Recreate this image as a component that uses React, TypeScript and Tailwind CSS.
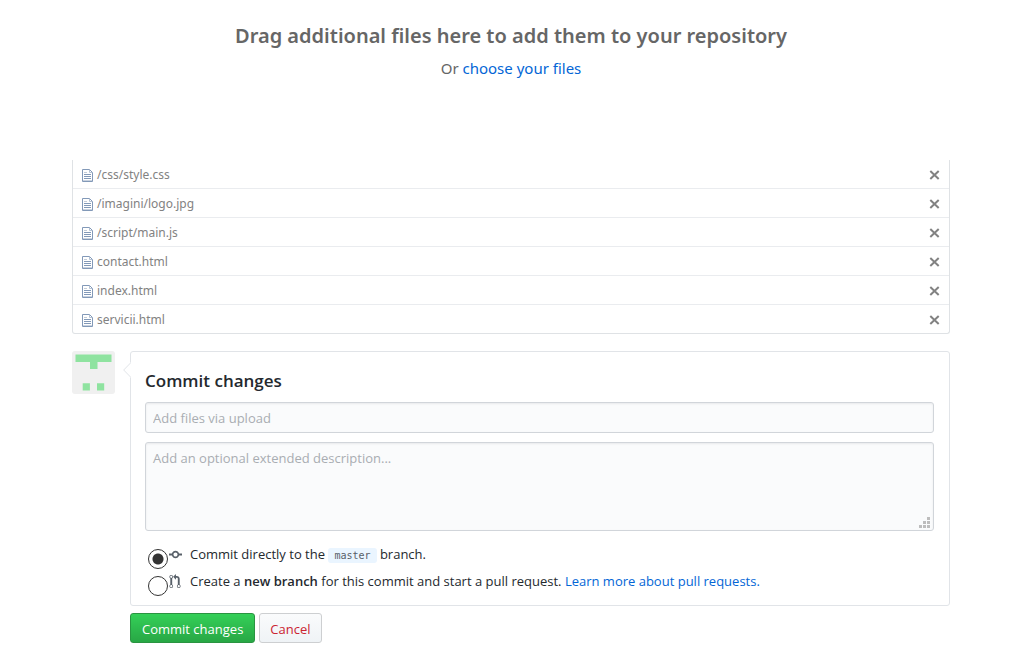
import { useState } from 'react';

const files = [
  '/css/style.css',
  '/imagini/logo.jpg',
  '/script/main.js',
  'contact.html',
  'index.html',
  'servicii.html',
];

function FileIcon() {
  return (
    <svg width="11" height="13" viewBox="0 0 11 13" className="shrink-0" aria-hidden="true">
      <path d="M.5.5h7l3 3v9H.5z" fill="#fff" stroke="#8299b8" />
      <path d="M7.5 1v2.5H10" fill="none" stroke="#b4c2d5" />
      <path d="M2 3.5h3" stroke="#c3ccd8" />
      <path d="M2 5.5h7M2 7.5h7M2 9.5h7" stroke="#8299b8" />
      <path d="M1 11.5h9" stroke="#c9d2df" />
    </svg>
  );
}

function RemoveIcon() {
  return (
    <svg width="11" height="10" viewBox="0 0 11 10" aria-hidden="true">
      <path d="M1.3 1 9.7 9M9.7 1 1.3 9" stroke="#828282" strokeWidth="2" />
    </svg>
  );
}

function CommitIcon() {
  return (
    <svg width="13" height="15" viewBox="0 0 14 16" fill="#586069" aria-hidden="true">
      <path fillRule="evenodd" d="M10.86 7c-.45-1.72-2-3-3.86-3-1.86 0-3.41 1.28-3.86 3H0v2h3.14c.45 1.72 2 3 3.86 3 1.86 0 3.41-1.28 3.86-3H14V7h-3.14zM7 10.2c-1.22 0-2.2-.98-2.2-2.2 0-1.22.98-2.2 2.2-2.2 1.22 0 2.2.98 2.2 2.2 0 1.22-.98 2.2-2.2 2.2z" />
    </svg>
  );
}

function PullRequestIcon() {
  return (
    <svg width="12" height="15" viewBox="0 0 12 16" fill="#586069" aria-hidden="true">
      <path fillRule="evenodd" d="M11 11.28V5c-.03-.78-.34-1.47-.94-2.06C9.46 2.35 8.78 2.03 8 2H7V0L4 3l3 3V4h1c.27.02.48.11.69.31.21.2.3.42.31.69v6.28A1.993 1.993 0 0 0 10 15a1.993 1.993 0 0 0 1-3.72zm-1 2.92c-.66 0-1.2-.55-1.2-1.2 0-.65.55-1.2 1.2-1.2.65 0 1.2.55 1.2 1.2 0 .65-.55 1.2-1.2 1.2zM4 3c0-1.11-.89-2-2-2a1.993 1.993 0 0 0-1 3.72v6.56A1.993 1.993 0 0 0 2 15a1.993 1.993 0 0 0 1-3.72V4.72c.59-.34 1-.98 1-1.72zm-.8 10c0 .66-.55 1.2-1.2 1.2-.65 0-1.2-.55-1.2-1.2 0-.65.55-1.2 1.2-1.2.65 0 1.2.55 1.2 1.2zM2 4.2C1.34 4.2.8 3.65.8 3c0-.65.55-1.2 1.2-1.2.65 0 1.2.55 1.2 1.2 0 .65-.55 1.2-1.2 1.2z" />
    </svg>
  );
}

function Avatar() {
  return (
    <svg width="43" height="43" viewBox="0 0 43 43" className="shrink-0 rounded-[3px]" aria-hidden="true">
      <path d="M0 0h43v43H0z" fill="#f0f0f0" />
      <path d="M3.5 3.5h36V11h-14v7H18v-7H3.5zM10.7 32.3h7.2v7.2h-7.2zM25 32.3h7.2v7.2H25z" fill="#8fe3a0" />
    </svg>
  );
}

const radioClass =
  'mt-[5px] -mb-[5px] size-5 shrink-0 appearance-none rounded-full border border-[#333] bg-white checked:bg-[radial-gradient(circle,#333_5px,transparent_6px)]';

export default function App() {
  const [list, setList] = useState(files);
  const [target, setTarget] = useState('direct');

  return (
    <main className="bg-white px-[72px] pb-5 font-['Open_Sans','Noto_Sans',sans-serif] text-[13px] leading-5 text-[#24292e]">
      <section className="flex flex-col items-center pt-5 pb-20 text-center font-['Noto_Sans',sans-serif] text-[#666]">
        <h1 className="text-[20px] leading-8 font-semibold">
          Drag additional files here to add them to your repository
        </h1>
        <p className="mt-1 text-[15px] leading-6">
          Or{' '}
          <a href="#choose" className="text-[#0366d6]">choose your files</a>
        </p>
      </section>

      <ul className="rounded-b-[3px] border border-t-0 border-[#dfe2e5] font-['Noto_Sans',sans-serif] text-[12px]">
        {list.map((file) => (
          <li
            key={file}
            className="border-b border-[#eaecef] px-[9px] pt-[5px] pb-[3px] text-[#828282] last:border-b-0"
          >
            <div className="flex items-center">
              <FileIcon />
              <span className="ml-1 flex-1">{file}</span>
              <button
                type="button"
                aria-label={`Remove ${file}`}
                className="cursor-pointer"
                onClick={() => setList(list.filter((f) => f !== file))}
              >
                <RemoveIcon />
              </button>
            </div>
          </li>
        ))}
      </ul>

      <form className="mt-[17px]" onSubmit={(e) => e.preventDefault()}>
        <div className="flex gap-[15px]">
          <Avatar />
          <div className="relative min-w-0 flex-1 rounded-[3px] border border-[#e1e4e8] pt-[17px] pr-[15px] pb-[14px] pl-[14px]">
            {/* speech bubble pointer */}
            <svg width="8" height="16" viewBox="0 0 8 16" className="absolute top-[10px] -left-[8px]" aria-hidden="true">
              <path d="M8 0v16L.7 8z" fill="#fff" />
              <path d="M8 .5.7 8 8 15.5" fill="none" stroke="#e1e4e8" />
            </svg>

            <h2 className="text-[17px] leading-6 font-semibold">Commit changes</h2>
            <input
              type="text"
              aria-label="Commit summary"
              placeholder="Add files via upload"
              className="mt-[9px] block h-[31px] w-full rounded-[3px] border border-[#d1d5da] bg-[#fafbfc] px-[7px] shadow-[inset_0_1px_2px_rgba(27,31,35,0.075)] placeholder:text-[#a9adb2]"
            />
            <div className="relative mt-[9px]">
              <textarea
                aria-label="Optional extended description"
                placeholder="Add an optional extended description..."
                className="block h-[89px] w-full resize-none rounded-[3px] border border-[#d1d5da] bg-[#fafbfc] px-[7px] py-[5px] shadow-[inset_0_1px_2px_rgba(27,31,35,0.075)] placeholder:text-[#a9adb2]"
              />
              <svg width="11" height="11" viewBox="0 0 11 11" className="absolute right-[4px] bottom-[3px]" aria-hidden="true">
                <path d="M8 0h3v3H8zM4 4h3v3H4zM8 4h3v3H8zM0 8h3v3H0zM4 8h3v3H4zM8 8h3v3H8z" fill="#bdbdbd" />
              </svg>
            </div>

            <div className="mt-[13px] flex flex-col gap-[7px] px-[3px]">
              <div className="flex">
                <input
                  id="commit-direct"
                  type="radio"
                  name="target"
                  checked={target === 'direct'}
                  onChange={() => setTarget('direct')}
                  className={radioClass}
                />
                <label htmlFor="commit-direct" className="ml-px flex">
                  <span className="flex h-5 w-[21px] items-center"><CommitIcon /></span>
                  <span>
                    Commit directly to the{' '}
                    <code className="rounded-[3px] bg-[#eaf5ff] px-[6px] py-[2px] font-['DejaVu_Sans_Mono',monospace] text-[10px] leading-none text-[#586069]">master</code>
                    {' '}branch.
                  </span>
                </label>
              </div>
              <div className="flex">
                <input
                  id="commit-branch"
                  type="radio"
                  name="target"
                  checked={target === 'branch'}
                  onChange={() => setTarget('branch')}
                  className={radioClass}
                />
                <label htmlFor="commit-branch" className="ml-px flex">
                  <span className="flex h-5 w-[21px] items-center"><PullRequestIcon /></span>
                  <span>
                    Create a <strong className="font-semibold">new branch</strong> for this commit and start a pull request.{' '}
                    <a href="#pull-requests" className="text-[#0366d6]">Learn more about pull requests.</a>
                  </span>
                </label>
              </div>
            </div>
          </div>
        </div>

        <div className="mt-[7px] ml-[58px] flex gap-1">
          <button
            type="submit"
            className="h-[30px] rounded-[3px] border border-[#2a9441] bg-linear-to-b from-[#34d058] to-[#28a745] px-[11px] pt-px font-medium text-white"
          >
            Commit changes
          </button>
          <button
            type="button"
            className="h-[30px] rounded-[3px] border border-[#cdcfd1] bg-linear-to-b from-[#fafbfc] to-[#eff3f6] px-[10px] pt-px font-medium text-[#cb2431]"
          >
            Cancel
          </button>
        </div>
      </form>
    </main>
  );
}
